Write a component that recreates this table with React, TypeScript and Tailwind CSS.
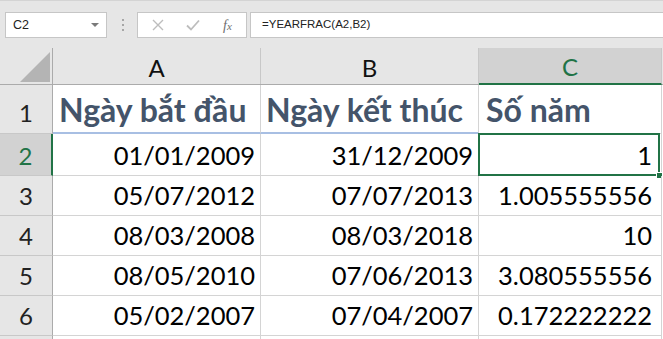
import { ReactNode } from "react"

const rows = [
  { n: 2, a: "01/01/2009", b: "31/12/2009", c: "1", h: "h-[42px]" },
  { n: 3, a: "05/07/2012", b: "07/07/2013", c: "1.005555556", h: "h-[40px]" },
  { n: 4, a: "08/03/2008", b: "08/03/2018", c: "10", h: "h-[40px]" },
  { n: 5, a: "08/05/2010", b: "07/06/2013", c: "3.080555556", h: "h-[40px]" },
  { n: 6, a: "05/02/2007", b: "07/04/2007", c: "0.172222222", h: "h-[40px]" },
]

function RowHead({ children, active, pb }: { children: ReactNode; active?: boolean; pb: string }) {
  return (
    <div
      className={
        "flex w-[53px] shrink-0 items-end justify-center border-b border-[#c8c8c8] text-[24px] leading-none " +
        pb +
        " " +
        (active
          ? "border-r-2 border-r-[#217346] bg-[#d2d2d2] text-[#217346]"
          : "border-r border-r-[#ababab] bg-[#e6e6e6] text-[#222]")
      }
    >
      {children}
    </div>
  )
}

export default function App() {
  return (
    <div className="relative h-[339px] w-[663px] overflow-hidden bg-white font-['Lato',sans-serif]">
      {/* Formula bar */}
      <div className="flex h-[48px] items-start border-t border-[#d4d4d4] bg-[#e6e6e6] pt-[11px]">
        <div className="ml-[5px] flex h-[26px] w-[102px] items-center justify-between border border-[#c6c6c6] bg-white pl-[7px] pr-[7px]">
          <span className="font-['Liberation_Sans',sans-serif] text-[12.5px] text-[#222]">C2</span>
          <span className="h-0 w-0 border-x-[4px] border-t-[4px] border-x-transparent border-t-[#7a7a7a]" />
        </div>
        <div className="ml-[15px] mt-[7px] flex flex-col gap-[3px]">
          <span className="h-[2px] w-[2px] bg-[#a6a6a6]" />
          <span className="h-[2px] w-[2px] bg-[#a6a6a6]" />
          <span className="h-[2px] w-[2px] bg-[#a6a6a6]" />
        </div>
        <div className="ml-[13px] flex h-[26px] w-[110px] items-center border border-[#c6c6c6] bg-white">
          <svg className="ml-[14px]" width="12" height="12" viewBox="0 0 12 12">
            <path d="M1 1L11 11M11 1L1 11" stroke="#bdbdbd" strokeWidth="1.4" fill="none" />
          </svg>
          <svg className="ml-[22px]" width="14" height="12" viewBox="0 0 14 12">
            <path d="M1 6.5L5 10.5L13 1.5" stroke="#bdbdbd" strokeWidth="1.8" fill="none" />
          </svg>
          <span className="ml-[23px] font-['Liberation_Serif',serif] text-[14px] italic text-[#6e6e6e]">
            f<span className="text-[11px]">x</span>
          </span>
        </div>
        <div className="ml-[3px] flex h-[26px] flex-1 items-center border border-r-0 border-[#c6c6c6] bg-white pl-[11px]">
          <span className="font-['Liberation_Sans',sans-serif] text-[11.5px] text-[#222]">=YEARFRAC(A2,B2)</span>
        </div>
      </div>

      {/* Column headers */}
      <div className="flex h-[37px] border-b border-[#ababab] bg-[#e6e6e6]">
        <div className="flex w-[53px] shrink-0 items-end border-r border-[#ababab] pb-[2px] pl-[20px] pt-[4px]">
          <svg width="30" height="30" viewBox="0 0 30 30">
            <polygon points="0,30 30,30 30,0" fill="#b4b4b4" />
          </svg>
        </div>
        <div className="flex w-[208px] shrink-0 items-center justify-center border-r border-[#c8c8c8] pt-[3px] text-[24px] text-[#111]">
          A
        </div>
        <div className="flex w-[218px] shrink-0 items-center justify-center border-r border-[#c8c8c8] pt-[3px] text-[24px] text-[#111]">
          B
        </div>
        <div className="-mb-px flex w-[183px] shrink-0 items-center justify-center border-b-2 border-r border-b-[#217346] border-r-[#c8c8c8] bg-[#d2d2d2] pt-[3px] text-[24px] text-[#217346]">
          C
        </div>
      </div>

      {/* Row 1 - titles */}
      <div className="flex h-[49px]">
        <RowHead pb="pb-[8px]">1</RowHead>
        <div className="flex w-[208px] shrink-0 items-end whitespace-nowrap border-b-2 border-r border-b-[#a8bfe3] border-r-[#d4d4d4] pb-[6px] pl-[6px] text-[32px] font-bold leading-none text-[#44546a]">
          Ngày bắt đầu
        </div>
        <div className="flex w-[218px] shrink-0 items-end whitespace-nowrap border-b-2 border-r border-b-[#a8bfe3] border-r-[#d4d4d4] pb-[6px] pl-[5px] text-[32px] font-bold leading-none text-[#44546a]">
          Ngày kết thúc
        </div>
        <div className="flex w-[183px] shrink-0 items-end whitespace-nowrap border-b border-r border-[#d4d4d4] pb-[7px] pl-[7px] text-[32px] font-bold leading-none text-[#44546a]">
          Số năm
        </div>
      </div>

      {/* Data rows */}
      {rows.map((r) => (
        <div key={r.n} className={"flex " + r.h}>
          <RowHead active={r.n === 2} pb="pb-[7px]">
            {r.n}
          </RowHead>
          <div className="flex w-[208px] shrink-0 items-end justify-end border-b border-r border-[#d4d4d4] pb-[7px] pr-[5px] text-[25.5px] leading-none text-black">
            {r.a}
          </div>
          <div className="flex w-[218px] shrink-0 items-end justify-end border-b border-r border-[#d4d4d4] pb-[7px] pr-[5px] text-[25.5px] leading-none text-black">
            {r.b}
          </div>
          <div className="relative flex w-[183px] shrink-0 items-end justify-end border-b border-r border-[#d4d4d4] pb-[7px] pr-[9px] text-[25.5px] leading-none text-black">
            {r.c}
            {r.n === 2 && (
              <>
                <div className="absolute -left-px -top-px bottom-[-1px] right-[1px] border-2 border-[#217346]" />
                <div className="absolute bottom-[-4px] right-[-2px] h-[7px] w-[7px] border border-white bg-[#217346]" />
              </>
            )}
          </div>
        </div>
      ))}

      {/* Row 7 start */}
      <div className="flex h-[10px]">
        <div className="w-[53px] shrink-0 border-r border-[#ababab] bg-[#e6e6e6]" />
        <div className="w-[208px] shrink-0 border-r border-[#d4d4d4]" />
        <div className="w-[218px] shrink-0 border-r border-[#d4d4d4]" />
        <div className="w-[183px] shrink-0 border-r border-[#d4d4d4]" />
      </div>
    </div>
  )
}
